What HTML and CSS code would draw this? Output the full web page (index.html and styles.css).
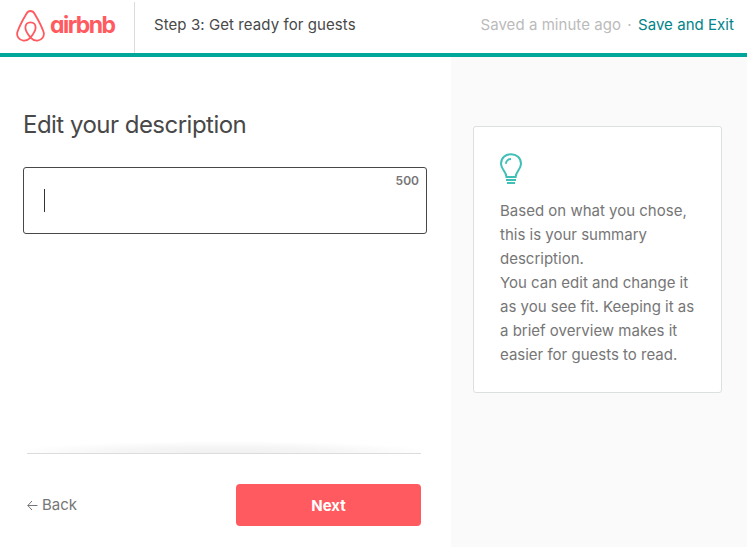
FILE: index.html
```html
<!DOCTYPE html>
<html lang="en">
<head>
<meta charset="utf-8">
<title>Edit your description</title>
<link rel="stylesheet" href="styles.css">
</head>
<body>
<header class="topbar">
  <a class="brand">
    <svg class="brand-mark" width="29" height="32" viewBox="0 0 30 33" aria-hidden="true">
      <path d="M15 28.5C11.8 24.6 9.7 21.3 9.7 18.1C9.7 14.8 12 12.7 15 12.7S20.3 14.8 20.3 18.1C20.3 21.3 18.2 24.6 15 28.5C12.4 31.2 10.1 31.9 7.6 31.6C3.2 31 .3 27.1 1.4 22.9C2.6 19.2 8.3 8 10.8 3.8C11.9 1.9 13.1 1 15 1S18.1 1.9 19.2 3.8C21.7 8 27.4 19.2 28.6 22.9C29.7 27.1 26.8 31 22.4 31.6C19.9 31.9 17.6 31.2 15 28.5Z"/>
    </svg>
    <span class="brand-name">airbnb</span>
  </a>
  <span class="step">Step 3: Get ready for guests</span>
  <div class="status"><span class="saved">Saved a minute ago</span><span class="dot">·</span><a class="exit">Save and Exit</a></div>
</header>
<div class="layout">
  <main class="editor">
    <h1 class="title">Edit your description</h1>
    <div class="field"><span class="caret"></span><span class="count">500</span></div>
    <footer class="actions">
      <a class="back">
        <svg class="arrow" width="11" height="10" viewBox="0 0 11 10" aria-hidden="true"><path d="M10.5 5.5H.8M5 1L.8 5.5L5 10"/></svg>
        <span>Back</span>
      </a>
      <button class="next">Next</button>
    </footer>
  </main>
  <aside class="side">
    <div class="tip">
      <svg class="bulb" width="24" height="32" viewBox="0 0 24 32" aria-hidden="true">
        <path d="M6.5 24C6.3 18.7 1 16.2 1 10.8C1 5 5.5 1.2 11 1.2S21 5 21 10.8C21 16.2 15.8 18.7 15.6 24ZM6 10.8C6 8.2 8.2 6 11 6M6 27H16M7 30H15"/>
      </svg>
      <p class="copy">Based on what you chose,<br>this is your summary<br>description.<br>You can edit and change it<br>as you see fit. Keeping it as<br>a brief overview makes it<br>easier for guests to read.</p>
    </div>
  </aside>
</div>
</body>
</html>
```

FILE: styles.css
```css
* { box-sizing: border-box; }
body { margin: 0; width: 747px; height: 547px; overflow: hidden; display: flex; flex-direction: column; background: #fff; color: #484848; font: 15px/24px Inter, "Liberation Sans", sans-serif; }
svg { fill: none; }
.topbar { height: 57px; flex: none; display: flex; align-items: center; border-bottom: 4px solid #00a699; padding-right: 13px; white-space: nowrap; }
.brand { width: 135px; height: 51px; align-self: flex-end; display: flex; align-items: center; border-right: 1px solid #dcdcdc; padding: 0 0 3px 16px; color: #ff5a5f; }
.brand-mark { flex: none; stroke: #ff5a5f; stroke-width: 1.9; }
.brand-name { margin: -2px 0 0 5px; font-size: 23px; font-weight: 700; letter-spacing: -1.55px; font-feature-settings: "cv11"; }
.step { margin-left: 19px; padding-bottom: 3px; letter-spacing: .08px; }
.status { margin-left: auto; padding-bottom: 3px; display: flex; letter-spacing: .05px; }
.saved { color: #bbb; }
.dot { width: 17px; text-align: center; color: #bbb; }
.exit { color: #008489; }
.layout { flex: 1; display: flex; }
.editor { width: 451px; padding: 50px 24px 0 23px; display: flex; flex-direction: column; }
.title { margin: 0; font-size: 24px; line-height: 36px; font-weight: 400; letter-spacing: -.52px; }
.field { width: 404px; height: 67px; margin-top: 24px; border: 1px solid #484848; border-radius: 3px; display: flex; justify-content: space-between; padding: 21px 7px 0 20px; }
.caret { width: 1px; height: 23px; background: #333; }
.count { margin-top: -16px; font-size: 12px; line-height: 16px; font-weight: 600; color: #767676; }
.actions { width: 394px; height: 94px; margin: auto 0 0 4px; padding-top: 30px; border-top: 1px solid #dcdcdc; display: flex; justify-content: space-between; position: relative; }
.actions::before { content: ""; position: absolute; left: 0; right: 0; top: -13px; height: 12px; background: radial-gradient(ellipse 55% 100% at 50% 100%, rgba(0,0,0,.06), rgba(0,0,0,.04) 50%, transparent); }
.back { display: flex; align-items: center; height: 42px; gap: 4px; color: #767676; }
.arrow { stroke: #767676; stroke-width: 1; }
.next { width: 185px; height: 42px; border: 0; border-radius: 4px; background: #ff5a5f; color: #fff; font: 700 15px/24px Inter, "Liberation Sans", sans-serif; padding: 2px 0 0; }
.side { flex: 1; background: #fafafa; padding: 69px 0 0 22px; }
.tip { width: 249px; height: 267px; border: 1px solid #dce0e0; border-radius: 3px; background: #fff; padding: 26px 0 0 26px; }
.bulb { display: block; stroke: #3fbfb6; stroke-width: 2; }
.copy { margin: 14px 0 0; color: #767676; white-space: nowrap; }
```
